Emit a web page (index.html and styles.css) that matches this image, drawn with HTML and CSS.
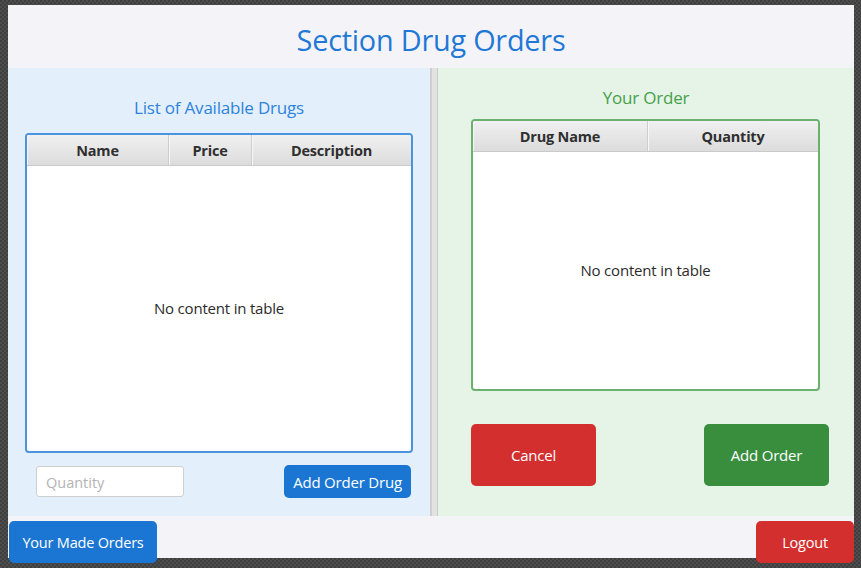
FILE: index.html
```html
<!DOCTYPE html>
<html>
<head>
<meta charset="utf-8">
<link rel="stylesheet" href="styles.css">
</head>
<body>
<div class="window">
  <header class="top">
    <h1 class="title">Section Drug Orders</h1>
  </header>
  <main class="main">
    <section class="panel panel-left">
      <h2 class="sub sub-blue">List of Available Drugs</h2>
      <div class="table table-blue">
        <div class="thead">
          <div class="th c-name">Name</div>
          <div class="th c-price">Price</div>
          <div class="th c-desc">Description</div>
        </div>
        <div class="tbody">No content in table</div>
      </div>
      <div class="order-row">
        <input class="qty" type="text" placeholder="Quantity">
        <button class="btn btn-blue btn-add-drug">Add Order Drug</button>
      </div>
    </section>
    <div class="divider"></div>
    <section class="panel panel-right">
      <h2 class="sub sub-green">Your Order</h2>
      <div class="table table-green">
        <div class="thead">
          <div class="th c-drug">Drug Name</div>
          <div class="th c-qty">Quantity</div>
        </div>
        <div class="tbody">No content in table</div>
      </div>
      <div class="action-row">
        <button class="btn btn-red btn-big">Cancel</button>
        <button class="btn btn-green btn-big">Add Order</button>
      </div>
    </section>
  </main>
  <footer class="bottom">
    <button class="btn btn-blue btn-foot btn-made">Your Made Orders</button>
    <button class="btn btn-red btn-foot btn-logout">Logout</button>
  </footer>
</div>
</body>
</html>
```
FILE: styles.css
```css
* { box-sizing: border-box; }
html, body { margin: 0; padding: 0; }
body {
  width: 861px;
  height: 568px;
  overflow: hidden;
  background-color: #3f3f3f;
  background-image:
    linear-gradient(45deg, #4d4d4d 25%, transparent 25%, transparent 75%, #4d4d4d 75%),
    linear-gradient(45deg, #4d4d4d 25%, transparent 25%, transparent 75%, #4d4d4d 75%);
  background-size: 4px 4px;
  background-position: 0 0, 2px 2px;
  font-family: "Open Sans", "Noto Sans", sans-serif;
  padding: 5px 0 0 8px;
}
.window {
  width: 846px;
  height: 553px;
  background: #f4f4f8;
  display: flex;
  flex-direction: column;
}
.top {
  height: 63px;
  display: flex;
  align-items: center;
  justify-content: center;
}
.title {
  margin: 0;
  font-weight: 400;
  font-size: 28.8px;
  color: #1f78d6;
  letter-spacing: -0.2px;
  padding-top: 6px;
}
.main {
  height: 448px;
  display: flex;
}
.panel {
  display: flex;
  flex-direction: column;
}
.panel-left {
  width: 422px;
  background: #e3f0fc;
  padding: 28px 17px 0 17px;
}
.panel-right {
  width: 416px;
  background: #e6f4e8;
  padding: 18px 33px 0 33px;
}
.divider {
  width: 8px;
  background: #e2e2e2;
  border-left: 2px solid #cfcfcf;
  border-right: 1px solid #c9c9c9;
}
.sub {
  margin: 0;
  font-weight: 400;
  font-size: 17px;
  text-align: center;
  line-height: 24px;
  letter-spacing: -0.2px;
}
.sub-blue { color: #2d83de; }
.sub-green { color: #45a04a; }
.table {
  background: #fff;
  border-radius: 4px;
  display: flex;
  flex-direction: column;
  overflow: hidden;
  flex: none;
}
.table-blue {
  margin-top: 13px;
  height: 320px;
  border: 2px solid #4b93dc;
}
.table-green {
  margin-top: 9px;
  height: 272px;
  border: 2px solid #6cb06f;
  width: 349px;
}
.thead {
  height: 31px;
  display: flex;
  background: linear-gradient(#f0f0f0, #dcdcdc);
  border-bottom: 1px solid #cacaca;
  flex: none;
}
.th {
  display: flex;
  align-items: center;
  justify-content: center;
  font-size: 14.5px;
  font-weight: 700;
  color: #2f2f2f;
  letter-spacing: -0.2px;
  border-right: 1px solid #cdcdcd;
  box-shadow: inset 1px 0 0 #f7f7f7;
}
.th:last-child { border-right: none; }
.c-name { width: 142px; }
.c-price { width: 83px; }
.c-desc { flex: 1; }
.c-drug { width: 175px; }
.c-qty { flex: 1; }
.tbody {
  flex: 1;
  display: flex;
  align-items: center;
  justify-content: center;
  font-size: 15px;
  color: #2b2b2b;
  letter-spacing: -0.2px;
  padding-bottom: 2px;
}
.order-row {
  display: flex;
  justify-content: space-between;
  align-items: center;
  margin-top: 12px;
  padding-left: 11px;
  padding-right: 2px;
}
.qty {
  width: 148px;
  height: 31px;
  border: 1px solid #cfcfcf;
  border-radius: 3px;
  background: #fff;
  font-family: inherit;
  font-size: 14.5px;
  padding: 2px 9px 0;
  outline: none;
}
.qty::placeholder { color: #b4b4b4; }
.btn {
  border: none;
  font-family: inherit;
  color: #fff;
  cursor: pointer;
  padding: 0;
  letter-spacing: -0.2px;
}
.btn-blue { background: #1a76d2; }
.btn-red { background: #d32f2f; }
.btn-green { background: #388e3c; }
.btn-add-drug {
  width: 127px;
  height: 33px;
  border-radius: 5px;
  font-size: 15px;
}
.action-row {
  display: flex;
  justify-content: space-between;
  margin-top: 33px;
  width: 358px;
}
.btn-big {
  width: 125px;
  height: 62px;
  border-radius: 5px;
  font-size: 15px;
}
.bottom {
  height: 42px;
  display: flex;
  justify-content: space-between;
  align-items: flex-start;
}
.btn-foot {
  height: 42px;
  margin-top: 5px;
  border-radius: 5px;
  font-size: 14.5px;
}
.btn-made { width: 148px; margin-left: 1px; }
.btn-logout { width: 98px; }
```
